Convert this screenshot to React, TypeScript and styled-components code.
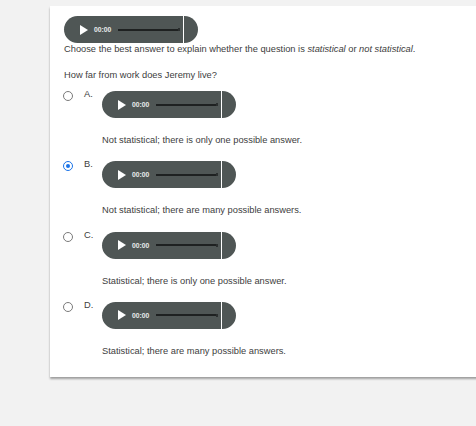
import React from "react";
import styled, { createGlobalStyle } from "styled-components";

const Global = createGlobalStyle`
  html, body { margin: 0; padding: 0; background: #f2f2f2; }
  body { font-family: "Liberation Sans", Arial, sans-serif; overflow: hidden; }
`;

const Page = styled.div`
  width: 476px;
  height: 426px;
  padding-top: 6px;
  padding-left: 50px;
  box-sizing: border-box;
`;

const Card = styled.div`
  background: #ffffff;
  width: 440px;
  padding: 10px 0 5px 14px;
  box-shadow: 0 2px 2px rgba(0, 0, 0, 0.35);
  color: #404040;
  font-size: 9.3px;
`;

const Player = styled.div`
  width: 134px;
  height: 27px;
  border-radius: 14px;
  background: #4f5655;
  display: flex;
  align-items: center;
  position: relative;
  flex-shrink: 0;
`;

const PlayIcon = styled.svg`
  margin-left: 16px;
  width: 8px;
  height: 10px;
`;

const Time = styled.span`
  margin-left: 6px;
  color: #e9ecec;
  font-size: 6.8px;
  font-weight: bold;
`;

const Track = styled.div`
  margin-left: 7px;
  width: 60px;
  height: 2px;
  background: #1e2121;
  position: relative;
  &::after {
    content: "";
    position: absolute;
    right: -2px;
    top: -0.5px;
    width: 2px;
    height: 3px;
    background: #2a2e2e;
  }
`;

const Divider = styled.div`
  position: absolute;
  left: 119px;
  top: 0;
  width: 1px;
  height: 27px;
  background: #ffffff;
`;

const Instructions = styled.p`
  margin: 1px 0 0 0;
  line-height: 11px;
`;

const Question = styled.p`
  margin: 15px 0 0 0;
  line-height: 11px;
`;

const OptionList = styled.div`
  margin-top: 10px;
  display: flex;
  flex-direction: column;
`;

const Option = styled.div`
  display: flex;
  flex-direction: column;
  height: 70.33px;
`;

const OptionTop = styled.div`
  display: flex;
  align-items: flex-start;
`;

const Radio = styled.span<{ $checked?: boolean }>`
  width: 8px;
  height: 8px;
  margin-top: 0px;
  margin-left: -1px;
  border-radius: 50%;
  border: 1px solid ${(p) => (p.$checked ? "#1a73e8" : "#7a7a7a")};
  position: relative;
  flex-shrink: 0;
  ${(p) =>
    p.$checked &&
    `&::after {
      content: "";
      position: absolute;
      left: 2px; top: 2px;
      width: 4px; height: 4px;
      border-radius: 50%;
      background: #1a73e8;
    }`}
`;

const Letter = styled.span`
  margin-left: 11px;
  width: 18px;
  line-height: 9px;
  margin-top: -1px;
`;

const Answer = styled.p`
  margin: 17px 0 0 38px;
  line-height: 11px;
`;

const AudioPlayer = () => (
  <Player>
    <PlayIcon viewBox="0 0 8 10">
      <polygon points="0,0 8,5 0,10" fill="#ffffff" />
    </PlayIcon>
    <Time>00:00</Time>
    <Track />
    <Divider />
  </Player>
);

const options = [
  { letter: "A.", text: "Not statistical; there is only one possible answer.", checked: false },
  { letter: "B.", text: "Not statistical; there are many possible answers.", checked: true },
  { letter: "C.", text: "Statistical; there is only one possible answer.", checked: false },
  { letter: "D.", text: "Statistical; there are many possible answers.", checked: false },
];

export default function App() {
  return (
    <Page>
      <Global />
      <Card>
        <AudioPlayer />
        <Instructions>
          Choose the best answer to explain whether the question is <i>statistical</i> or{" "}
          <i>not statistical</i>.
        </Instructions>
        <Question>How far from work does Jeremy live?</Question>
        <OptionList>
          {options.map((o) => (
            <Option key={o.letter}>
              <OptionTop>
                <Radio $checked={o.checked} />
                <Letter>{o.letter}</Letter>
                <AudioPlayer />
              </OptionTop>
              <Answer>{o.text}</Answer>
            </Option>
          ))}
        </OptionList>
      </Card>
    </Page>
  );
}
